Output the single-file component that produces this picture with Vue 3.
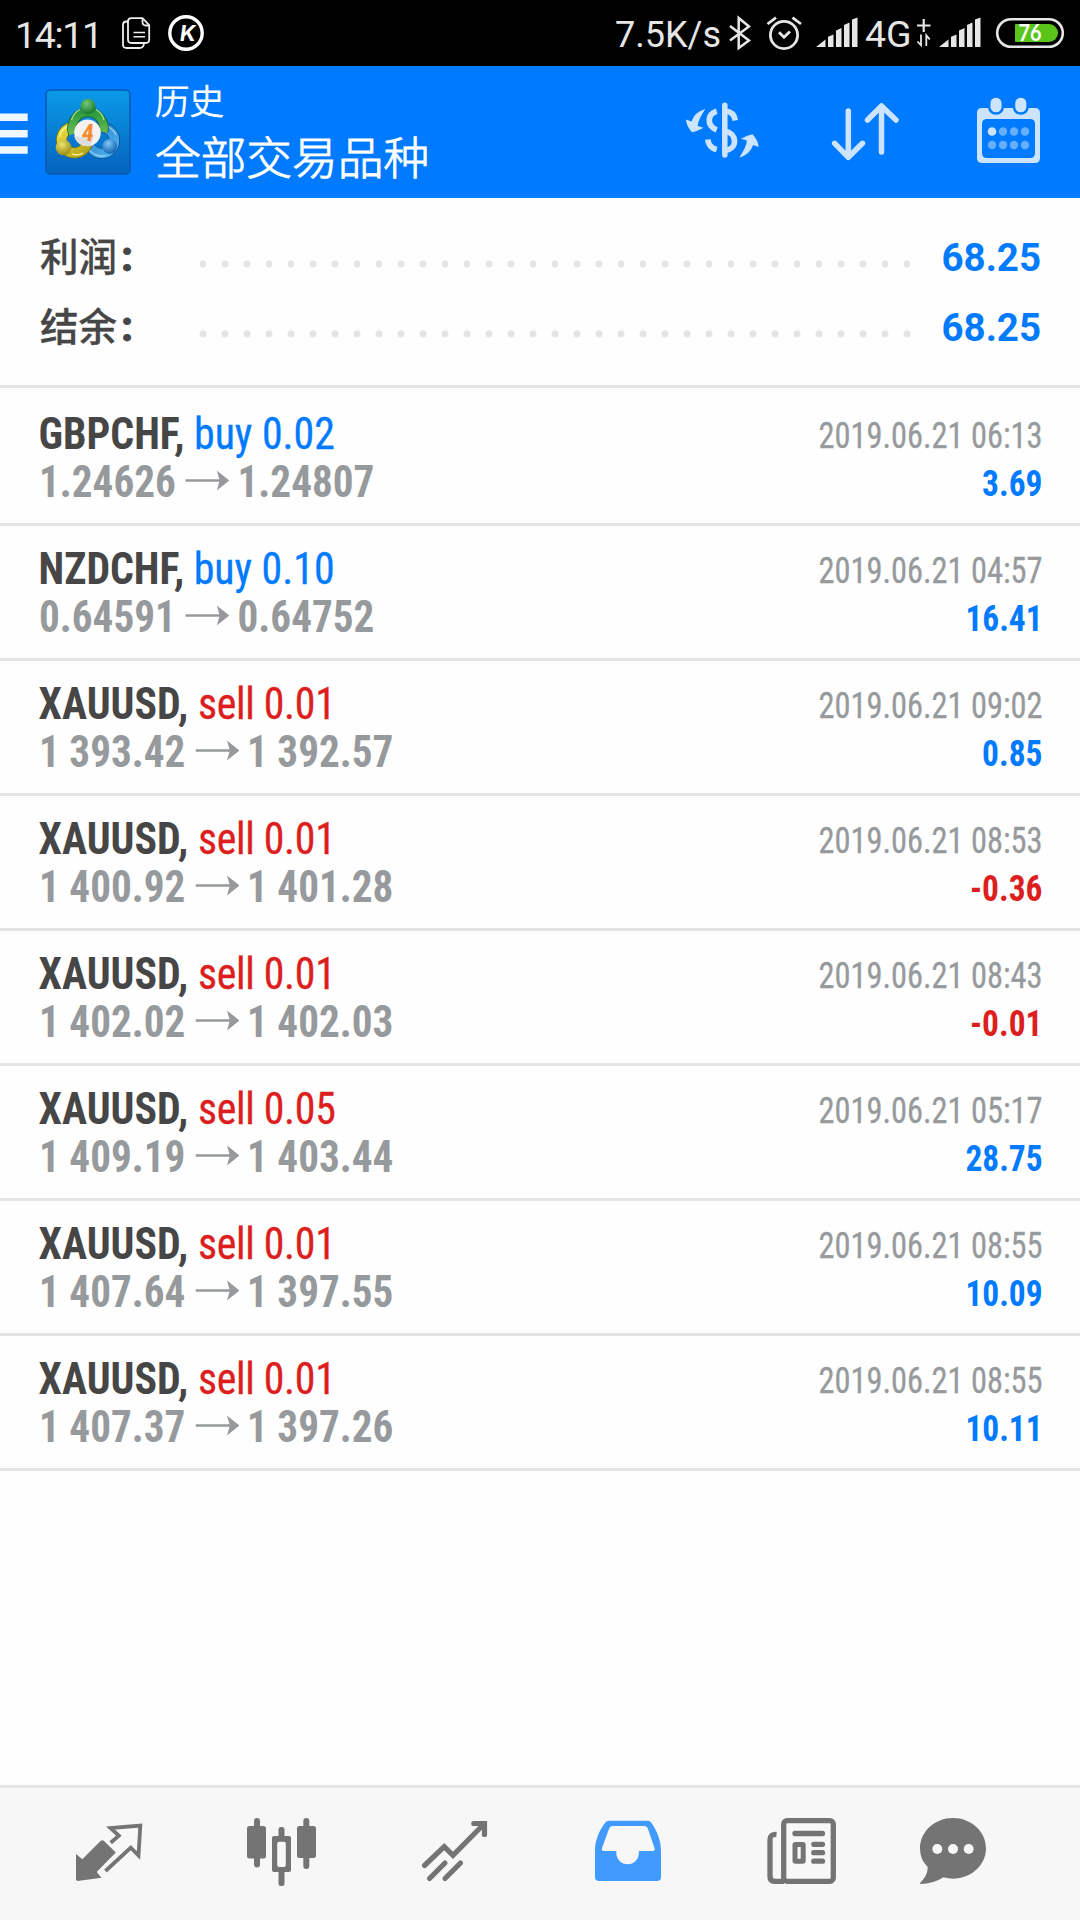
<script setup>
const summary = [
  { label: '利润', value: '68.25' },
  { label: '结余', value: '68.25' },
]

const deals = [
  { symbol: 'GBPCHF', side: 'buy', lot: '0.02', open: '1.24626', close: '1.24807', time: '2019.06.21 06:13', profit: '3.69' },
  { symbol: 'NZDCHF', side: 'buy', lot: '0.10', open: '0.64591', close: '0.64752', time: '2019.06.21 04:57', profit: '16.41' },
  { symbol: 'XAUUSD', side: 'sell', lot: '0.01', open: '1 393.42', close: '1 392.57', time: '2019.06.21 09:02', profit: '0.85' },
  { symbol: 'XAUUSD', side: 'sell', lot: '0.01', open: '1 400.92', close: '1 401.28', time: '2019.06.21 08:53', profit: '-0.36' },
  { symbol: 'XAUUSD', side: 'sell', lot: '0.01', open: '1 402.02', close: '1 402.03', time: '2019.06.21 08:43', profit: '-0.01' },
  { symbol: 'XAUUSD', side: 'sell', lot: '0.05', open: '1 409.19', close: '1 403.44', time: '2019.06.21 05:17', profit: '28.75' },
  { symbol: 'XAUUSD', side: 'sell', lot: '0.01', open: '1 407.64', close: '1 397.55', time: '2019.06.21 08:55', profit: '10.09' },
  { symbol: 'XAUUSD', side: 'sell', lot: '0.01', open: '1 407.37', close: '1 397.26', time: '2019.06.21 08:55', profit: '10.11' },
]
</script>

<template>
  <div class="screen">
    <div class="status">
      <span class="clock">14:11</span>
      <svg class="notes" width="95" height="66" viewBox="115 0 95 66" fill="none" stroke="#eee" stroke-width="1.8">
        <path d="M131.500 18.200H142.500L149.200 25V39.500Q149.200 43 145.700 43H131.500Q128 43 128 39.500V21.700Q128 18.200 131.500 18.200Z" />
        <path d="M142.500 18.500V22Q142.500 25.500 146 25.500H149" />
        <path d="M128 21.500H126.500Q123 21.500 123 25V44.500Q123 48 126.500 48H139.500Q143.500 48 144 43.500" />
        <path d="M133.500 32.500H145M133.500 36.700H145" stroke-width="1.600" />
        <circle cx="186" cy="33" r="16.200" stroke="#fff" stroke-width="3.400" />
        <text transform="translate(186.800 41) skewX(-8)" class="kay">K</text>
      </svg>
      <span class="speed">7.5K/s</span>
      <svg width="136" height="66" viewBox="728 0 136 66" fill="none" stroke="#e6e6e6" stroke-width="2.800">
        <path d="M730 26L749 40.500L738.700 48V18L749 26.500L730 40.500" stroke-width="2.500" />
        <circle cx="784" cy="35" r="13.600" />
        <path d="M779 32.300L784 37.300L790 31.500" />
        <path d="M767.500 24L776 17.700M792.500 17.700L801 24" />
        <path d="M816 47L825.500 39.500V47ZM828 36.800L833.500 34.500V47H828ZM836 30.500L841.500 28V47H836ZM844 25L849.500 22.500V47H844ZM852 19.500L857.500 17.500V47H852Z" fill="#e6e6e6" stroke="none" />
      </svg>
      <span class="net">4G</span>
      <svg width="166" height="66" viewBox="914 0 166 66" fill="none" stroke="#e6e6e6" stroke-width="2.200">
        <path d="M917 25.500H930.500M923.700 19V32" />
        <path d="M921 34.500V45.300L917.500 41.500M926.300 46V35.300L929.800 39.500" stroke-width="1.800" />
        <path transform="translate(123 0)" d="M816 47L825.500 39.500V47ZM828 36.800L833.500 34.500V47H828ZM836 30.500L841.500 28V47H836ZM844 25L849.500 22.500V47H844ZM852 19.500L857.500 17.500V47H852Z" fill="#e6e6e6" stroke="none" />
        <rect x="997.200" y="19.200" width="65.600" height="27.600" rx="13.800" stroke-width="2.600" />
        <path d="M1016 24H1049A9 9 0 0 1 1049 42H1016Q1015 42 1015 41V25Q1015 24 1016 24Z" fill="#5ac41b" stroke="none" />
        <text x="1018.500" y="41.300" textLength="23" lengthAdjust="spacingAndGlyphs" class="charge">76</text>
      </svg>
    </div>

    <div class="header">
      <svg width="140" height="132" viewBox="0 66 140 132">
        <defs>
          <linearGradient id="tile" x1="0" y1="0" x2="0" y2="1"><stop offset="0" stop-color="#0b9be8" /><stop offset="1" stop-color="#0562bd" /></linearGradient>
          <linearGradient id="green" x1="0" y1="0" x2="0" y2="1"><stop offset="0" stop-color="#2c9a3c" /><stop offset="1" stop-color="#6cbb55" /></linearGradient>
          <linearGradient id="yellow" x1="0" y1="0" x2="1" y2="1"><stop offset="0" stop-color="#e8dc3e" /><stop offset="1" stop-color="#b7a51a" /></linearGradient>
          <linearGradient id="blue" x1="0" y1="0" x2="1" y2="1"><stop offset="0" stop-color="#2b7fcb" /><stop offset="1" stop-color="#4fb2ee" /></linearGradient>
          <radialGradient id="ballG" cx=".4" cy=".3" r=".75"><stop offset="0" stop-color="#72c878" /><stop offset="1" stop-color="#12742a" /></radialGradient>
          <radialGradient id="ballY" cx=".4" cy=".3" r=".75"><stop offset="0" stop-color="#eee56a" /><stop offset="1" stop-color="#948711" /></radialGradient>
          <radialGradient id="ballB" cx=".4" cy=".3" r=".75"><stop offset="0" stop-color="#7dc6f5" /><stop offset="1" stop-color="#0b5cad" /></radialGradient>
        </defs>
        <path d="M0 113.500H27.700V121H0ZM0 130H27.700V137.500H0ZM0 146.300H27.700V153.800H0Z" fill="#eef6ff" />
        <rect x="46" y="90" width="84" height="84" rx="4.500" fill="url(#tile)" stroke="#0759ae" stroke-width="1.500" />
        <g fill="none">
          <circle cx="101.500" cy="140.500" r="13" stroke="#0a4c92" stroke-width="11" />
          <circle cx="101.500" cy="140.500" r="13" stroke="url(#blue)" stroke-width="9.500" />
          <path d="M89 149.500A15.500 15.500 0 0 0 106 155.500M116 135A16 16 0 0 0 108 127" stroke="#9fd8fb" stroke-width="1.300" />
          <circle cx="74.500" cy="140" r="13" stroke="#796f10" stroke-width="11" />
          <circle cx="74.500" cy="140" r="13" stroke="url(#yellow)" stroke-width="9.500" />
          <path d="M59.500 137A15.500 15.500 0 0 1 73 124.500M72 154Q78 156 83 153" stroke="#f8f3a0" stroke-width="1.300" />
          <path d="M73 134A16 16 0 1 1 103.500 132" stroke="#12602a" stroke-width="9.500" />
          <path d="M73 134A16 16 0 1 1 103.500 132" stroke="url(#green)" stroke-width="8" />
          <path d="M71.500 120A17 17 0 0 1 80 109.500M96 109.500A17 17 0 0 1 104 120" stroke="#a5dc92" stroke-width="1.300" />
        </g>
        <circle cx="88" cy="106.500" r="7.700" fill="url(#ballG)" />
        <circle cx="63.500" cy="147.500" r="7.800" fill="url(#ballY)" />
        <circle cx="109.700" cy="146.500" r="7.300" fill="url(#ballB)" />
        <circle cx="87.500" cy="132.800" r="13.300" fill="#f4f2f0" />
        <path d="M74.200 136Q88 139 94 137L90 146A13.300 13.300 0 0 1 74.200 136Z" fill="#ddd" />
        <text transform="translate(87 141) skewX(-6)" class="four">4</text>
      </svg>
      <div class="titles">
        <div class="t1">历史</div>
        <div class="t2">全部交易品种</div>
      </div>
      <svg class="tools" width="420" height="132" viewBox="660 66 420 132" fill="none" stroke="#cce4ff" stroke-width="5.500" stroke-linecap="round">
        <path d="M724.800 105.300V155" />
        <g stroke-linecap="butt" stroke-width="5.700">
          <path d="M725 111Q734 111.500 735.300 120.500" />
          <path d="M716.700 111.200C707.500 114 706 125.500 716.700 130" />
          <path d="M707.800 139.500Q708.500 147.500 716.700 149.500" />
          <path d="M725 131C737.500 133.500 738 149 725 150.500" />
        </g>
        <path id="turn" d="M705.300 109Q698 120 697.700 126L703.600 127.800Q697 131.500 692 132.300Q686.300 126 686 119.500L691.500 121.500Q694.500 112 705.300 109Z" fill="#cce4ff" stroke="none" />
        <use href="#turn" transform="rotate(180 722.300 133.300)" />
        <g stroke-linejoin="round">
          <path d="M848.300 111V157M834.700 143.300L848.300 157.300L862.500 143.300" />
          <path d="M881.500 152V106M867.500 120L881.500 106L896 120" />
        </g>
        <g stroke="none">
          <path fill-rule="evenodd" d="M982 108H1035Q1040 108 1040 113V158Q1040 163 1035 163H982Q977 163 977 158V113Q977 108 982 108ZM987 119Q982 119 982 124V153Q982 158 987 158H1030Q1035 158 1035 153V124Q1035 119 1030 119Z" fill="#cce4ff" />
          <g fill="#cce4ff" stroke="#007aff" stroke-width="2.500">
            <rect x="989.200" y="96.500" width="13.600" height="17" rx="6.500" />
            <rect x="1014" y="96.500" width="13.600" height="17" rx="6.500" />
          </g>
          <circle cx="992" cy="131.500" r="4.300" fill="#cce4ff" />
          <g fill="#66afff">
            <circle cx="1003" cy="131.500" r="4.200" /><circle cx="1014" cy="131.500" r="4.200" /><circle cx="1025" cy="131.500" r="4.200" />
            <circle cx="992" cy="145" r="4.200" /><circle cx="1003" cy="145" r="4.200" /><circle cx="1014" cy="145" r="4.200" /><circle cx="1025" cy="145" r="4.200" />
          </g>
        </g>
      </svg>
    </div>

    <div class="summary">
      <div v-for="s in summary" :key="s.label" class="sum">
        <span class="lab">{{ s.label }}<b>:</b></span>
        <span class="dots"></span>
        <span class="val">{{ s.value }}</span>
      </div>
    </div>

    <div class="list">
      <div v-for="(d, i) in deals" :key="i" class="deal">
        <div class="line">
          <span class="name"><b>{{ d.symbol }},</b> <span :class="d.side">{{ d.side }} {{ d.lot }}</span></span>
          <span class="time">{{ d.time }}</span>
        </div>
        <div class="line">
          <span class="price">{{ d.open }}<svg width="47.500" height="22" viewBox="0 0 44 22" preserveAspectRatio="none"><path d="M0 9.700H34L31.500 1L44 11L31.500 21L34 12.300H0Z" fill="#979a9c" /></svg>{{ d.close }}</span>
          <span class="profit" :class="{ loss: d.profit.startsWith('-') }">{{ d.profit }}</span>
        </div>
      </div>
    </div>

    <div class="nav">
      <svg viewBox="23 1788 172 132">
        <path d="M76 1854L82.300 1859.300L100.500 1841Q102.300 1839.500 104 1841L115.800 1852.500L96.700 1872L101.500 1877.700L77.500 1881L76 1880Z" fill="#747474" />
        <path d="M110.700 1842.700L118.800 1835.700L110.500 1828L140.300 1825.500L138.500 1855.500L130.800 1847.700L105.500 1871" fill="none" stroke="#747474" stroke-width="3.800" />
      </svg>
      <svg viewBox="195 1788 172 132" fill="#747474">
        <rect x="247" y="1826" width="19" height="32.500" rx="2.500" /><rect x="254" y="1818" width="6" height="49.500" rx="3" />
        <rect x="297" y="1826" width="19" height="32" rx="2.500" /><rect x="303.300" y="1818" width="6" height="51" rx="3" />
        <rect x="278.500" y="1827" width="6" height="59" rx="2.500" /><rect x="272" y="1836" width="19" height="36" rx="2" />
        <rect x="277.200" y="1841.700" width="8.600" height="25.300" rx="2" fill="#f7f7f7" />
      </svg>
      <svg viewBox="367 1788 172 132" fill="none" stroke="#747474" stroke-width="5.200" stroke-linecap="round">
        <path d="M424.500 1865.500L444.200 1846.700L453 1855.300L484 1824M473.800 1823.500H484.500V1834.500" />
        <path d="M429.500 1878.500L445 1863M445 1878.500L460.500 1863" />
      </svg>
      <svg viewBox="539 1788 172 132">
        <path fill-rule="evenodd" d="M609 1820.700H647.500Q650 1820.700 651.500 1823C657 1831 661 1840 661 1851V1877Q661 1881 657 1881H599Q595 1881 595 1877V1851C595 1840 599 1831 605 1823Q606.500 1820.700 609 1820.700ZM613 1826Q610 1826 609 1829L602 1848Q601 1851 604 1851H616.300V1853A11.300 11.300 0 0 0 638.900 1853V1851H652.500Q655.500 1851 654.500 1848L648 1829Q647 1826 644 1826Z" fill="#419bff" />
      </svg>
      <svg viewBox="711 1788 172 132" fill="none" stroke="#747474" stroke-width="5.300">
        <rect x="783.700" y="1820.700" width="49.600" height="60.600" rx="3.500" />
        <path d="M776.500 1834.500Q770 1834 770 1839.500V1876.500Q770 1881.300 774.500 1881.300H784" />
        <path d="M795 1833.500H822.500M813.800 1844.300H822.500M813.800 1852.700H822.500M813.800 1861.200H822.500" stroke-linecap="round" />
        <rect x="795" y="1844.500" width="8.200" height="16.800" rx=".5" stroke-width="5" />
      </svg>
      <svg viewBox="883 1788 172 132">
        <path d="M953 1818C971.500 1818 986 1831.500 986 1848.500C986 1865 971 1878.700 953 1878.700Q948 1878.700 943.500 1877.300Q933 1884 920.500 1884Q919.500 1883.500 920.500 1882.500Q928 1875 927.700 1867Q920 1859.500 920 1848.500C920 1831.500 934.500 1818 953 1818Z" fill="#747474" />
        <g fill="#f7f7f7"><circle cx="937.300" cy="1849" r="5" /><circle cx="953" cy="1849" r="5" /><circle cx="968.700" cy="1849" r="5" /></g>
      </svg>
    </div>
  </div>
</template>

<style>
body { background: #fefefe; }
</style>

<style scoped>
.screen {
  width: 1080px;
  height: 1920px;
  display: flex;
  flex-direction: column;
  overflow: hidden;
  background: #fefefe;
  font-family: Roboto, 'Noto Sans CJK SC', sans-serif;
}
svg { display: block; flex: none; }

.status {
  flex: none;
  height: 66px;
  background: #000;
  color: #e6e6e6;
  display: flex;
  white-space: nowrap;
}
.clock { box-sizing: border-box; width: 115px; padding-left: 15px; font-size: 37.500px; letter-spacing: -1.300px; line-height: 71px; }
.speed { width: 113px; margin-left: 405px; font-size: 36px; line-height: 70px; }
.net { width: 49px; margin-left: 1px; margin-right: 0; font-size: 37.500px; line-height: 69px; }
.kay { font: 700 22px Inter, sans-serif; fill: #fff; stroke: none; text-anchor: middle; }
.charge { font: 700 23px Lato, sans-serif; fill: #fff; stroke: none; }
.four { font: 700 24px 'Roboto Condensed', Roboto, sans-serif; font-stretch: 75%; fill: #f58a2c; text-anchor: middle; }

.header {
  flex: none;
  height: 132px;
  display: flex;
  background: #007aff;
  color: #fff;
}
.titles {
  width: 520px;
  box-sizing: border-box;
  padding: 10px 0 0 15px;
  font-family: 'Noto Sans CJK SC', sans-serif;
  font-weight: 300;
  -webkit-text-stroke: .9px #fff;
}
.t1 { font-size: 34.500px; line-height: 46px; height: 51px; }
.t2 { font-size: 45.700px; line-height: 56px; }

.summary {
  flex: none;
  box-sizing: border-box;
  height: 190px;
  padding: 24px 39px 0 40px;
  border-bottom: 3px solid #e4e4e4;
}
.sum { display: flex; height: 70px; align-items: center; }
.lab {
  width: 160px;
  font: 500 38.500px/70px 'Noto Sans CJK SC', sans-serif;
  color: #464646;
  -webkit-text-stroke: .3px #464646;
  position: relative;
  top: -2px;
}
.lab b { font-family: Roboto, sans-serif; font-size: 42px; font-weight: 800; margin-left: 4px; -webkit-text-stroke: .8px #464646; }
.dots {
  flex: none;
  width: 726px;
  height: 8px;
  margin: 14px 0 0 -8px;
  background: radial-gradient(circle at 11px 4px, #e4e4e4 3px, transparent 4px) 0 0 / 22px 8px;
}
.val { flex: 1; padding-top: 2px; text-align: right; font-size: 38.500px; line-height: 70px; font-weight: 700; color: #007aff; }

.list { flex: 1; font-family: 'Roboto Condensed', Roboto, sans-serif; font-stretch: 75%; }
.deal {
  box-sizing: border-box;
  height: 135px;
  padding: 18px 38px 0 39px;
  border-bottom: 3px solid #e4e4e4;
}
.deal:first-child { height: 138px; padding-top: 21px; }
.line { display: flex; justify-content: space-between; align-items: baseline; height: 48px; line-height: 48px; white-space: nowrap; }
.name { font-size: 44.500px; color: #464646; transform: translate(-.4px, .5px) scaleX(.94); transform-origin: left; }
.buy { color: #007aff; -webkit-text-stroke: .3px #007aff; }
.sell { color: #dc1e1e; letter-spacing: -.35px; -webkit-text-stroke: .3px #dc1e1e; }
.price { display: flex; font-size: 44.500px; font-weight: 700; color: #979a9c; transform: translateY(.5px) scaleX(.926); transform-origin: left; }
.price svg { margin: 12px 8.500px 0 10.500px; }
.time { font-size: 36px; color: #979a9c; transform: translateX(.6px) scaleX(.9); transform-origin: right; -webkit-text-stroke: .3px #979a9c; }
.profit { font-size: 36px; font-weight: 700; color: #007aff; transform: translateX(.4px) scaleX(.928); transform-origin: right; }
.loss { color: #dc1e1e; }

.nav {
  flex: none;
  box-sizing: border-box;
  height: 135px;
  padding-left: 23px;
  display: flex;
  background: #f7f7f7;
  border-top: 3px solid #e4e4e4;
}
.nav svg { width: 172px; height: 132px; }
</style>
